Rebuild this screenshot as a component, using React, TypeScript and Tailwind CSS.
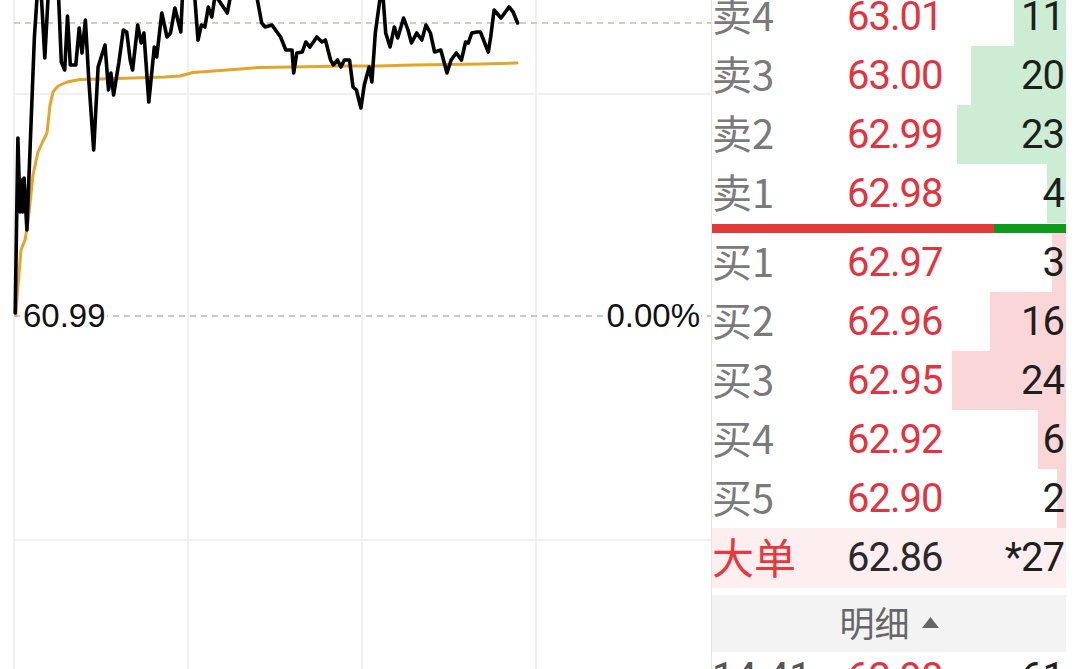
import React from "react";

const CJK = { fontFamily: '"Noto Sans CJK SC", "Noto Sans", sans-serif' };
const NUM = { fontFamily: 'Roboto, "Noto Sans", sans-serif' };
const CHART = { fontFamily: '"Liberation Sans", Arial, sans-serif' };

const sell = [
  { l: "卖4", p: "63.01", v: 11 },
  { l: "卖3", p: "63.00", v: 20 },
  { l: "卖2", p: "62.99", v: 23 },
  { l: "卖1", p: "62.98", v: 4 },
];
const buy = [
  { l: "买1", p: "62.97", v: 3 },
  { l: "买2", p: "62.96", v: 16 },
  { l: "买3", p: "62.95", v: 24 },
  { l: "买4", p: "62.92", v: 6 },
  { l: "买5", p: "62.90", v: 2 },
];

const black =
  "15.2,313 17.9,138 20,212 21.4,180 22.7,212 24.1,178 26.9,230 34.4,37 37.2,-5 41.3,-5 44.8,58 48.2,-5 58.5,-5 61.3,62 64.7,70 67.5,16 70.3,65 75.8,65 79.2,28 82,53 85.4,20 88.8,80 93.7,150 98.1,67 105,45 108.5,90 110.9,73 113.6,95 118.8,63 123.3,30 126.7,32 130.2,60 132.6,70 137.7,25 141.2,43 143.9,33 148.8,102 154.3,47 156.7,57 161.8,13 167,37 170.5,33 174.9,8 180.8,32 182.5,-5 194.6,-5 198,40 201.4,25 204.9,27 208.3,7 211.8,17 215.2,-5 227.3,13 230.7,-5 256.5,-5 261.7,23 265.2,27 272,25 275.5,30 280.6,37 285.8,50 292,50 293.7,73 296.8,53 302.3,52 305.8,42 309.9,47 316.8,37 322,42 325.4,40 330.6,60 333.3,65 337.5,60 340.9,67 344.4,60 349.5,60 353,87 356.4,90 360.9,108 364.3,85 369.1,67 371.9,82 375.3,33 380.5,-5 382.9,-5 385.7,33 390.1,47 394.3,27 397.7,38 403.6,18 408,30 411.5,43 416.7,33 421.8,40 426,25 430.4,33 434.6,52 440.8,50 447,73 451.1,60 456.3,53 461.4,60 465.6,42 468.3,43 471.8,33 476.9,32 480.4,32 488.3,52 490.7,37 494.1,10 501,18 509,7 513.1,12 517.6,23";

const yellow =
  "16,315 17,298 21,250 25,240 28,222 33,175 38,152 43,141 47,133 50,105 53,92 58,86 67,82 80,79.5 100,79 133,78 165,77 180,76 193,72.5 234,69.5 258,67.5 293,67 344,66 379,66 413,65 482,64 517,63";

function Chart() {
  return (
    <div className="relative h-[669px] w-[711px] shrink-0">
      <svg width="711" height="669" viewBox="0 0 711 669" className="block">
        {[14, 188, 362, 536].map((x) => (
          <line key={x} x1={x} y1={0} x2={x} y2={669} stroke="#ececec" strokeWidth={1.5} />
        ))}
        <line x1={14} y1={94} x2={711} y2={94} stroke="#ececec" strokeWidth={1.5} />
        <line x1={14} y1={540} x2={711} y2={540} stroke="#ececec" strokeWidth={1.5} />
        <line x1={14} y1={23} x2={711} y2={23} stroke="#bfbfb0" strokeWidth={1.6} strokeDasharray="6 5" />
        <line x1={14} y1={316} x2={711} y2={316} stroke="#b8b8b8" strokeWidth={1.6} strokeDasharray="6 5" />
        <polyline points={yellow} fill="none" stroke="#e2a62c" strokeWidth={3} strokeLinejoin="round" strokeLinecap="round" />
        <polyline points={black} fill="none" stroke="#000000" strokeWidth={3.6} strokeLinejoin="round" strokeLinecap="round" />
      </svg>
      <div className="absolute left-[22px] top-[299px] bg-white px-[1px] text-[33px] leading-[33px] text-[#111]" style={CHART}>
        60.99
      </div>
      <div className="absolute right-[10px] top-[299px] bg-white px-[1px] text-[33px] leading-[33px] text-[#111]" style={CHART}>
        0.00%
      </div>
    </div>
  );
}

function Row({ l, p, v, bar }: { l: string; p: string; v: number; bar: string }) {
  return (
    <div className="relative flex h-[59px] items-center">
      <div className={`absolute right-0 top-0 h-full ${bar}`} style={{ width: v * 4.75 }} />
      <span className="relative w-[135px] -translate-y-[3px] text-[40px] leading-none text-[#7a7a7a]" style={CJK}>
        {l}
      </span>
      <span className="relative text-[40px] leading-none tracking-[-1px] text-[#e4333f]" style={NUM}>
        {p}
      </span>
      <span className="relative flex-1 pr-[2px] text-right text-[40px] leading-none tracking-[-1px] text-[#1e1e1e]" style={NUM}>
        {v}
      </span>
    </div>
  );
}

function Panel() {
  return (
    <div className="h-[669px] w-[355px] shrink-0 overflow-hidden border-l border-[#e6e6e6]">
      <div className="-mt-[13px]">
        {sell.map((r) => (
          <Row key={r.l} {...r} bar="bg-[#ccedd3]" />
        ))}
        <div className="mt-[1px] flex h-[9px]">
          <div className="w-[282px] bg-[#e23a36]" />
          <div className="flex-1 bg-[#109a1b]" />
        </div>
        {buy.map((r) => (
          <Row key={r.l} {...r} bar="bg-[#fad6d8]" />
        ))}
        <div className="flex h-[60px] items-center bg-[#fdefef]">
          <span className="w-[135px] -translate-y-[2px] text-[42px] leading-none text-[#e8383d]" style={CJK}>
            大单
          </span>
          <span className="text-[40px] leading-none tracking-[-1px] text-[#2a2a2a]" style={NUM}>
            62.86
          </span>
          <span className="flex-1 pr-[2px] text-right text-[40px] leading-none tracking-[-1px] text-[#1e1e1e]" style={NUM}>
            *27
          </span>
        </div>
        <div className="mt-[7px] flex h-[57px] items-center justify-center bg-[#f3f3f3]">
          <span className="-translate-y-[2px] text-[35px] leading-none text-[#666]" style={CJK}>
            明细
          </span>
          <svg width="17" height="11" viewBox="0 0 17 11" className="ml-[12px] -translate-y-[1px]">
            <polygon points="8.5,0 17,11 0,11" fill="#666" />
          </svg>
        </div>
        <div className="flex pt-[6px]">
          <span className="w-[135px] text-[40px] leading-none text-[#555]" style={NUM}>
            14:41
          </span>
          <span className="text-[40px] leading-none tracking-[-1px] text-[#e4333f]" style={NUM}>
            62.98
          </span>
          <span className="flex-1 pr-[2px] text-right text-[40px] leading-none tracking-[-1px] text-[#1e1e1e]" style={NUM}>
            61
          </span>
        </div>
      </div>
    </div>
  );
}

export default function App() {
  return (
    <div className="flex h-[669px] w-[1080px] overflow-hidden bg-white">
      <Chart />
      <Panel />
    </div>
  );
}
